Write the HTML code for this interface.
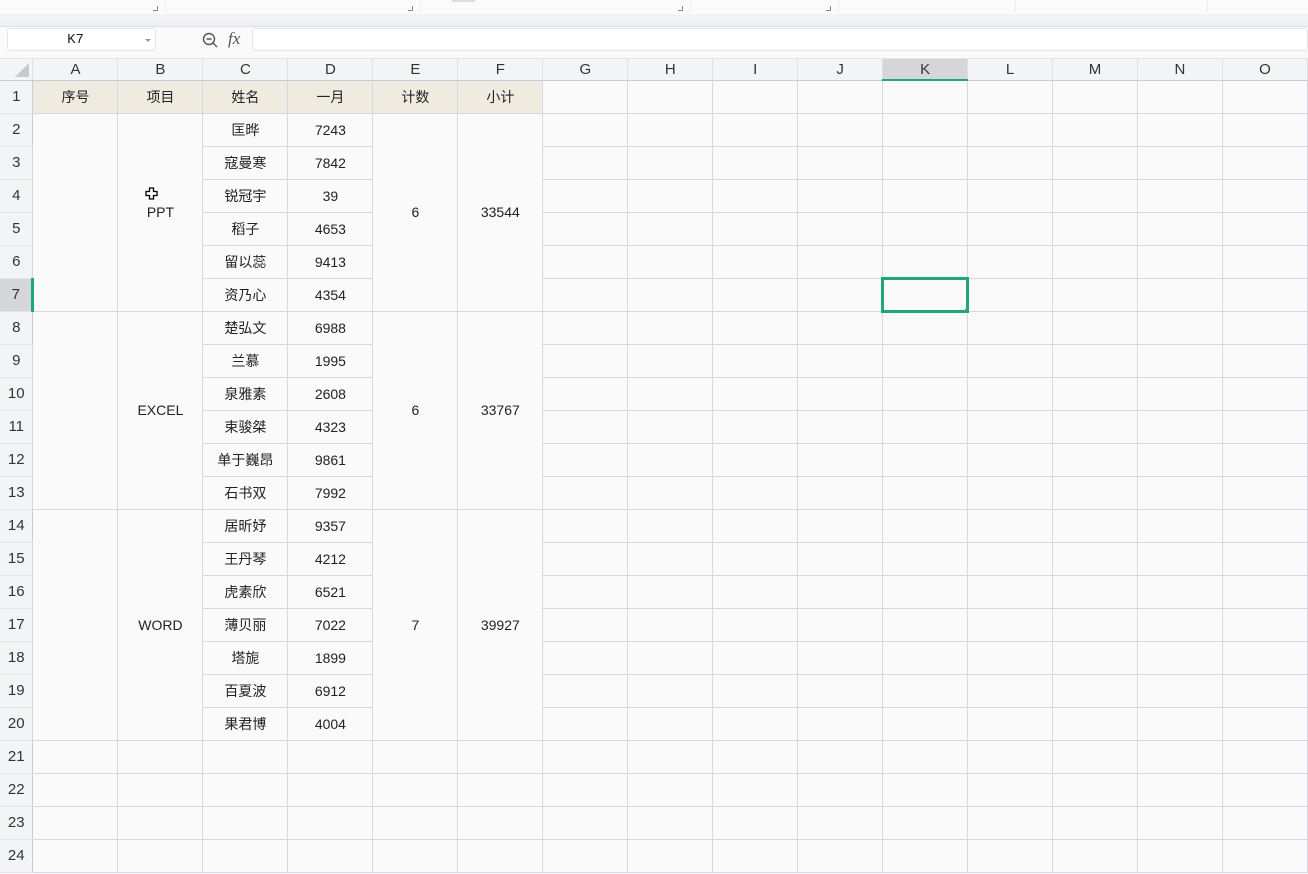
<!DOCTYPE html>
<html><head><meta charset="utf-8">
<style>
*{margin:0;padding:0;box-sizing:border-box}
html,body{width:1308px;height:874px;overflow:hidden;background:#fafafa;font-family:"Liberation Sans","Noto Sans CJK SC",sans-serif;color:#222}
.top{position:absolute;left:0;top:0;width:1308px;height:14px;background:#fbfbfb}
.top i{position:absolute;top:6px;width:5px;height:5px;border-right:1px solid #888;border-bottom:1px solid #888}
.top b{position:absolute;top:0;width:1px;height:12px;background:#eee}
.band{position:absolute;left:0;top:14px;width:1308px;height:13px;background:linear-gradient(#f1f3f5,#eef0f3);border-bottom:1px solid #dcdfe3}
.fbar{position:absolute;left:0;top:27px;width:1308px;height:32px;background:#fafafa;border-bottom:1px solid #e2e4e8}
.nb{position:absolute;left:7px;top:1px;width:149px;height:23px;background:#fff;border:1px solid #e3e5e8;border-radius:3px;font-family:"Liberation Mono",monospace;font-size:14px;text-align:center;line-height:22px;padding-right:12px}
.nb:after{content:"";position:absolute;right:4px;top:10px;border:3px solid transparent;border-top:3px solid #999}
.fx{position:absolute;left:228px;top:2px;font-family:"Liberation Serif",serif;font-style:italic;font-size:17px;color:#555}
.fi{position:absolute;left:252px;top:1px;width:1056px;height:23px;background:#fff;border:1px solid #e3e5e8;border-radius:3px}
table{position:absolute;left:0;top:59px;border-collapse:collapse;table-layout:fixed}
td{border:1px solid #d6d8e0;height:33px;text-align:center;font-size:14px;padding:0;overflow:hidden;white-space:nowrap;background:#fafafa}
tr.h td{height:21px;background:#f3f4f6;font-size:15px;color:#333;border-color:#dde0e6;border-top:0;border-bottom:1px solid #c9ccd4}
td.rh{background:#f3f4f6;font-size:15px;color:#333;border-color:#e3e5ea;border-left:0;border-right:1px solid #c9ccd4}
tr.r1 td{background:#efebe1}
tr.r1 td.rh{background:#f3f4f6}
tr.r1 td.n{background:#fafafa}
td.sel{background:#d4d6da!important}
</style></head><body>
<div class="top">
<i style="left:153px"></i><b style="left:165px"></b><i style="left:408px"></i><b style="left:420px"></b>
<div style="position:absolute;left:452px;top:0;width:23px;height:2px;background:#ddd"></div>
<i style="left:678px"></i><b style="left:690px"></b><i style="left:826px"></i><b style="left:838px"></b>
<b style="left:1015px"></b><b style="left:1207px"></b>
</div>
<div class="band"></div>
<div class="fbar">
<div class="nb">K7</div>
<svg style="position:absolute;left:201px;top:4px" width="18" height="18" viewBox="0 0 18 18" fill="none" stroke="#555" stroke-width="1.4"><circle cx="8" cy="8" r="5.5"/><path d="M5.5 8h5M12 12l4 4"/></svg>
<div class="fx">fx</div>
<div class="fi"></div>
</div>
<table>
<colgroup><col style="width:33px"><col span="15" style="width:85px"></colgroup>
<tr class="h"><td style="background:#f3f4f6;position:relative;border-left:0"><svg style="position:absolute;left:15px;top:4px" width="14" height="14"><path d="M14 0V14H0Z" fill="#c8cacd"/></svg></td><td>A</td><td>B</td><td>C</td><td>D</td><td>E</td><td>F</td><td>G</td><td>H</td><td>I</td><td>J</td><td class="sel" style="border-bottom:2px solid #21a67a">K</td><td>L</td><td>M</td><td>N</td><td>O</td></tr>
<tr class="r1"><td class="rh">1</td><td>序号</td><td>项目</td><td>姓名</td><td>一月</td><td>计数</td><td>小计</td><td class="n"></td><td class="n"></td><td class="n"></td><td class="n"></td><td class="n"></td><td class="n"></td><td class="n"></td><td class="n"></td><td class="n"></td></tr>
<tr><td class="rh">2</td><td rowspan="6"></td><td rowspan="6" style="position:relative">PPT<svg style="position:absolute;left:27px;top:73px" width="14" height="14"><path d="M4.5 1h4v3.5H12v4H8.5V12h-4V8.5H1v-4h3.5Z" fill="#fff" stroke="#000" stroke-width="1.3"/></svg></td><td>匡晔</td><td>7243</td><td rowspan="6">6</td><td rowspan="6">33544</td><td></td><td></td><td></td><td></td><td></td><td></td><td></td><td></td><td></td></tr>
<tr><td class="rh">3</td><td>寇曼寒</td><td>7842</td><td></td><td></td><td></td><td></td><td></td><td></td><td></td><td></td><td></td></tr>
<tr><td class="rh">4</td><td>锐冠宇</td><td>39</td><td></td><td></td><td></td><td></td><td></td><td></td><td></td><td></td><td></td></tr>
<tr><td class="rh">5</td><td>稻子</td><td>4653</td><td></td><td></td><td></td><td></td><td></td><td></td><td></td><td></td><td></td></tr>
<tr><td class="rh">6</td><td>留以蕊</td><td>9413</td><td></td><td></td><td></td><td></td><td></td><td></td><td></td><td></td><td></td></tr>
<tr><td class="rh sel" style="border-right:3px solid #21a67a">7</td><td>资乃心</td><td>4354</td><td></td><td></td><td></td><td></td><td style="border:3px solid #21a67a;position:relative"><span style="position:absolute;right:-4px;bottom:-4px;width:5px;height:5px;background:#21a67a"></span></td><td></td><td></td><td></td><td></td></tr>
<tr><td class="rh">8</td><td rowspan="6"></td><td rowspan="6">EXCEL</td><td>楚弘文</td><td>6988</td><td rowspan="6">6</td><td rowspan="6">33767</td><td></td><td></td><td></td><td></td><td></td><td></td><td></td><td></td><td></td></tr>
<tr><td class="rh">9</td><td>兰慕</td><td>1995</td><td></td><td></td><td></td><td></td><td></td><td></td><td></td><td></td><td></td></tr>
<tr><td class="rh">10</td><td>泉雅素</td><td>2608</td><td></td><td></td><td></td><td></td><td></td><td></td><td></td><td></td><td></td></tr>
<tr><td class="rh">11</td><td>束骏桀</td><td>4323</td><td></td><td></td><td></td><td></td><td></td><td></td><td></td><td></td><td></td></tr>
<tr><td class="rh">12</td><td>单于巍昂</td><td>9861</td><td></td><td></td><td></td><td></td><td></td><td></td><td></td><td></td><td></td></tr>
<tr><td class="rh">13</td><td>石书双</td><td>7992</td><td></td><td></td><td></td><td></td><td></td><td></td><td></td><td></td><td></td></tr>
<tr><td class="rh">14</td><td rowspan="7"></td><td rowspan="7">WORD</td><td>居昕妤</td><td>9357</td><td rowspan="7">7</td><td rowspan="7">39927</td><td></td><td></td><td></td><td></td><td></td><td></td><td></td><td></td><td></td></tr>
<tr><td class="rh">15</td><td>王丹琴</td><td>4212</td><td></td><td></td><td></td><td></td><td></td><td></td><td></td><td></td><td></td></tr>
<tr><td class="rh">16</td><td>虎素欣</td><td>6521</td><td></td><td></td><td></td><td></td><td></td><td></td><td></td><td></td><td></td></tr>
<tr><td class="rh">17</td><td>薄贝丽</td><td>7022</td><td></td><td></td><td></td><td></td><td></td><td></td><td></td><td></td><td></td></tr>
<tr><td class="rh">18</td><td>塔旎</td><td>1899</td><td></td><td></td><td></td><td></td><td></td><td></td><td></td><td></td><td></td></tr>
<tr><td class="rh">19</td><td>百夏波</td><td>6912</td><td></td><td></td><td></td><td></td><td></td><td></td><td></td><td></td><td></td></tr>
<tr><td class="rh">20</td><td>果君博</td><td>4004</td><td></td><td></td><td></td><td></td><td></td><td></td><td></td><td></td><td></td></tr>
<tr><td class="rh">21</td><td></td><td></td><td></td><td></td><td></td><td></td><td></td><td></td><td></td><td></td><td></td><td></td><td></td><td></td><td></td></tr>
<tr><td class="rh">22</td><td></td><td></td><td></td><td></td><td></td><td></td><td></td><td></td><td></td><td></td><td></td><td></td><td></td><td></td><td></td></tr>
<tr><td class="rh">23</td><td></td><td></td><td></td><td></td><td></td><td></td><td></td><td></td><td></td><td></td><td></td><td></td><td></td><td></td><td></td></tr>
<tr><td class="rh">24</td><td></td><td></td><td></td><td></td><td></td><td></td><td></td><td></td><td></td><td></td><td></td><td></td><td></td><td></td><td></td></tr>
</table>
</body></html>
